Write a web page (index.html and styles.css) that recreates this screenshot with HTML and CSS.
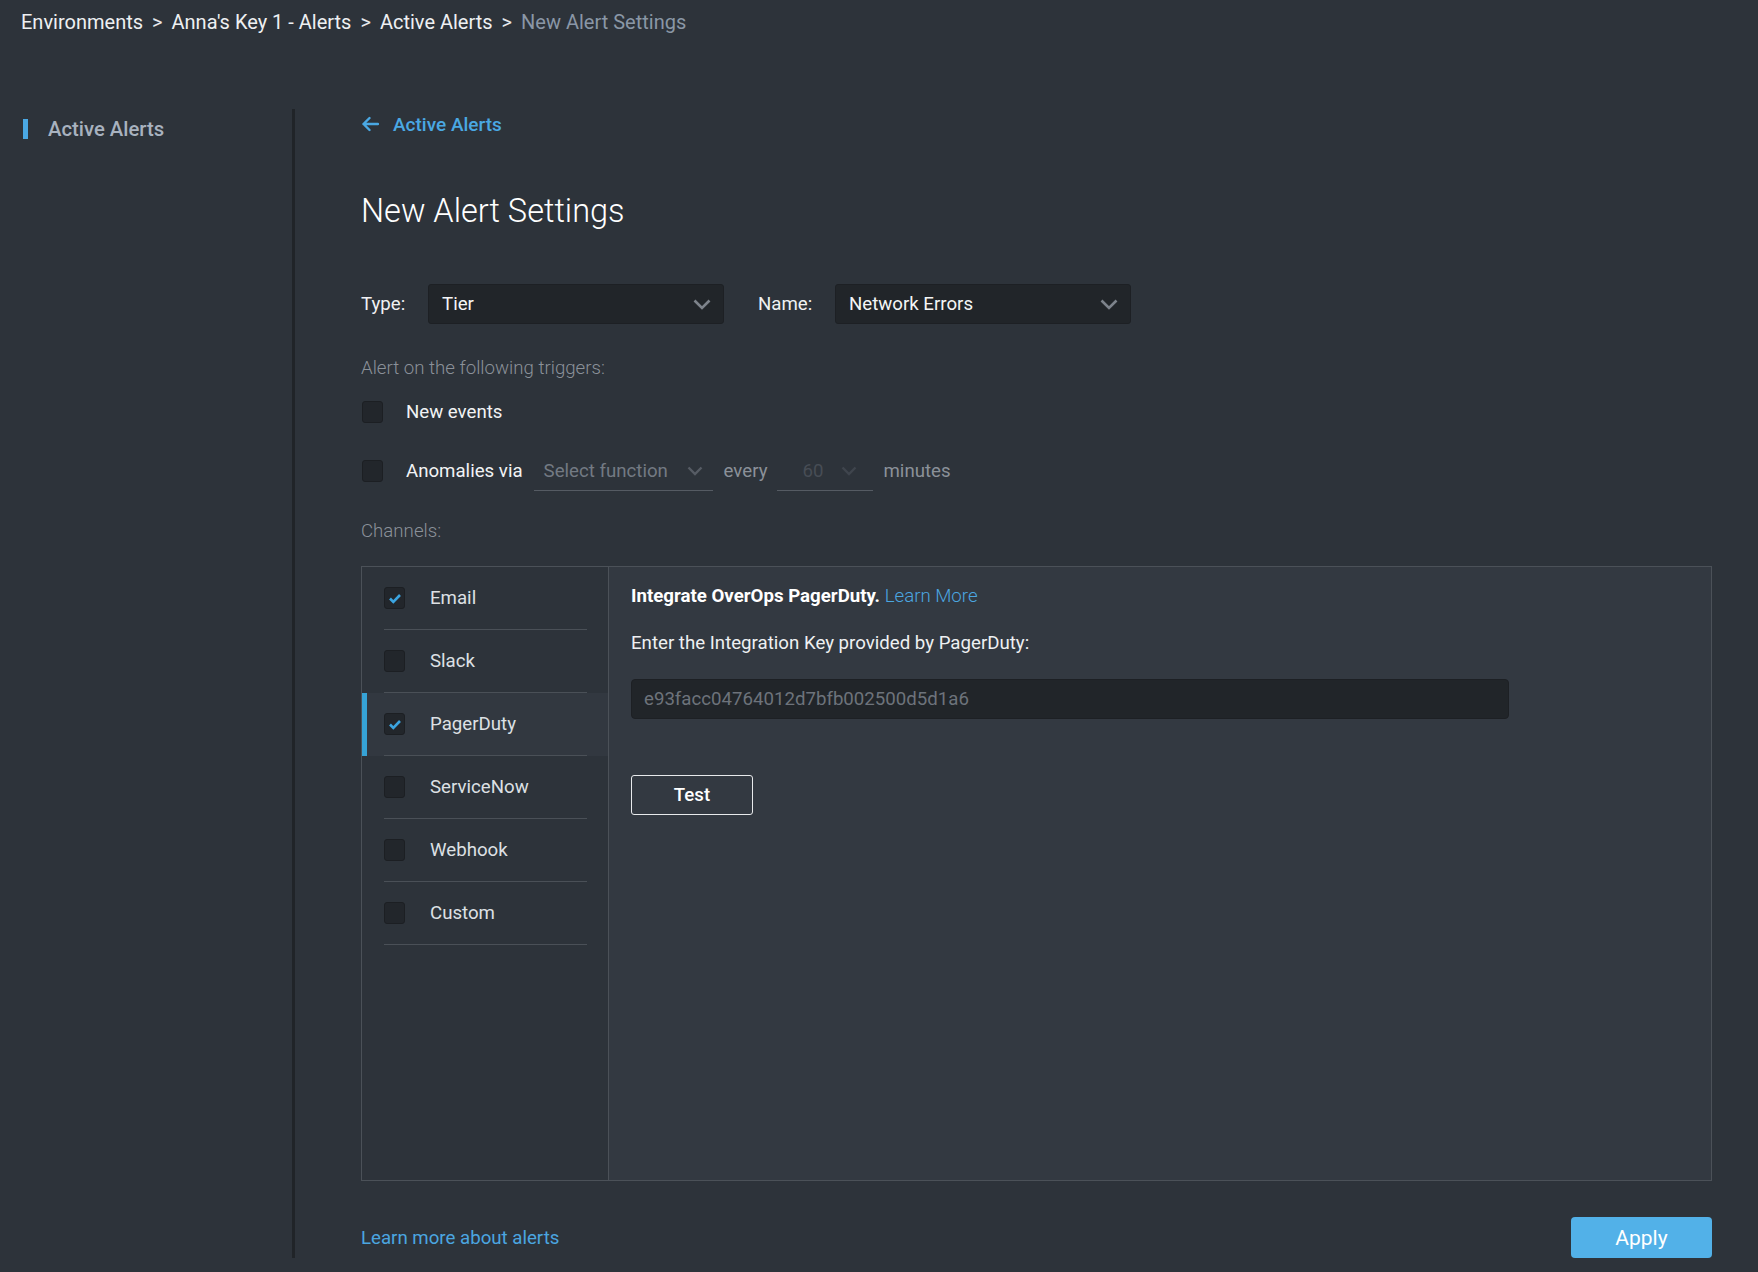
FILE: index.html
```html
<!DOCTYPE html>
<html lang="en">
<head>
<meta charset="utf-8">
<title>New Alert Settings</title>
<link rel="stylesheet" href="styles.css">
</head>
<body>
<header class="breadcrumb">
  <span class="crumb">Environments</span><span class="sep">&gt;</span><span class="crumb">Anna's Key 1 - Alerts</span><span class="sep">&gt;</span><span class="crumb">Active Alerts</span><span class="sep">&gt;</span><span class="crumb current">New Alert Settings</span>
</header>
<div class="layout">
  <aside class="sidebar">
    <div class="side-item"><span class="side-bar"></span><span class="side-text">Active Alerts</span></div>
  </aside>
  <main class="content">
    <a class="back" href="#">
      <svg class="back-arrow" width="18" height="16" viewBox="0 0 18 16"><path d="M17 8H2.5M8.5 2 2.5 8l6 6" fill="none" stroke="#4aa8e3" stroke-width="2.4" stroke-linecap="round" stroke-linejoin="round"/></svg>
      <span>Active Alerts</span>
    </a>
    <h1 class="title">New Alert Settings</h1>

    <div class="type-row">
      <span class="field-label type-label">Type:</span>
      <div class="select"><span>Tier</span><svg width="18" height="11" viewBox="0 0 18 11"><path d="M1.5 1.5 9 9l7.5-7.5" fill="none" stroke="#7d838b" stroke-width="2.6"/></svg></div>
      <span class="field-label name-label">Name:</span>
      <div class="select"><span>Network Errors</span><svg width="18" height="11" viewBox="0 0 18 11"><path d="M1.5 1.5 9 9l7.5-7.5" fill="none" stroke="#7d838b" stroke-width="2.6"/></svg></div>
    </div>

    <div class="section-label triggers-label">Alert on the following triggers:</div>
    <div class="trigger trigger-first">
      <span class="checkbox"></span>
      <span class="trigger-text">New events</span>
    </div>
    <div class="trigger trigger-second">
      <span class="checkbox"></span>
      <span class="trigger-text">Anomalies via</span>
      <div class="line-select func-select"><span>Select function</span><svg width="16" height="10" viewBox="0 0 16 10"><path d="M1.5 1.5 8 8l6.5-6.5" fill="none" stroke="#565c64" stroke-width="2.4"/></svg></div>
      <span class="muted-text every">every</span>
      <div class="line-select minutes-select"><span>60</span><svg width="16" height="10" viewBox="0 0 16 10"><path d="M1.5 1.5 8 8l6.5-6.5" fill="none" stroke="#3f454d" stroke-width="2.4"/></svg></div>
      <span class="muted-text minutes">minutes</span>
    </div>

    <div class="section-label channels-label">Channels:</div>
    <div class="panel">
      <div class="channels">
        <div class="channel"><div class="channel-inner"><span class="checkbox checked"><svg width="14" height="11" viewBox="0 0 14 11"><path d="M2 5.5 5.3 8.8 12 2" fill="none" stroke="#3ba4e0" stroke-width="2.6"/></svg></span><span>Email</span></div></div>
        <div class="channel"><div class="channel-inner"><span class="checkbox"></span><span>Slack</span></div></div>
        <div class="channel selected"><div class="channel-inner"><span class="checkbox checked"><svg width="14" height="11" viewBox="0 0 14 11"><path d="M2 5.5 5.3 8.8 12 2" fill="none" stroke="#3ba4e0" stroke-width="2.6"/></svg></span><span>PagerDuty</span></div></div>
        <div class="channel"><div class="channel-inner"><span class="checkbox"></span><span>ServiceNow</span></div></div>
        <div class="channel"><div class="channel-inner"><span class="checkbox"></span><span>Webhook</span></div></div>
        <div class="channel"><div class="channel-inner"><span class="checkbox"></span><span>Custom</span></div></div>
      </div>
      <div class="detail">
        <p class="integrate"><strong>Integrate OverOps PagerDuty.</strong> <a href="#" class="link">Learn More</a></p>
        <p class="enter">Enter the Integration Key provided by PagerDuty:</p>
        <div class="key-input">e93facc04764012d7bfb002500d5d1a6</div>
        <button class="test-btn" type="button">Test</button>
      </div>
    </div>

    <div class="footer">
      <a href="#" class="link footer-link">Learn more about alerts</a>
      <button class="apply-btn" type="button">Apply</button>
    </div>
  </main>
</div>
</body>
</html>
```
FILE: styles.css
```css
* { box-sizing: border-box; }
html, body {
  margin: 0;
  padding: 0;
  background: #2d333a;
  font-family: Roboto, "Liberation Sans", sans-serif;
  color: #e6e8eb;
}
body { height: 1272px; overflow: hidden; }

.breadcrumb {
  padding: 10px 0 0 21px;
  font-size: 20px;
  line-height: 24px;
  height: 34px;
  color: #eef0f2;
  white-space: nowrap;
}
.breadcrumb .sep { margin: 0 9px; color: #e6e8eb; }
.breadcrumb .current { color: #8a97a6; }

.layout {
  margin-top: 75px;
  display: flex;
  height: 1149px;
}
.sidebar {
  width: 295px;
  flex: none;
  border-right: 3px solid #202428;
  padding-top: 10px;
}
.side-item { display: flex; align-items: center; height: 20px; }
.side-bar { width: 5px; height: 20px; background: #4aa8e3; margin-left: 23px; }
.side-text { margin-left: 20px; font-size: 20.3px; font-weight: 500; color: #a8b2bf; }

.content {
  flex: 1;
  padding: 0 46px 0 66px;
  display: flex;
  flex-direction: column;
}

.back {
  display: flex;
  align-items: center;
  height: 30px;
  gap: 14px;
  color: #4aa8e3;
  font-size: 19px;
  font-weight: 500;
  text-decoration: none;
}
.back-arrow { flex: none; }

.title {
  margin: 52px 0 0;
  font-size: 32.5px;
  line-height: 40px;
  font-weight: 300;
  color: #ffffff;
}

.type-row {
  margin-top: 53px;
  height: 40px;
  display: flex;
  align-items: center;
}
.field-label { font-size: 18.67px; color: #f0f1f3; }
.type-label { width: 67px; }
.name-label { width: 77px; margin-left: 34px; }
.select {
  width: 296px;
  height: 40px;
  background: #212529;
  border: 1px solid #1d2024;
  border-radius: 3px;
  display: flex;
  align-items: center;
  justify-content: space-between;
  padding: 0 12px 0 13px;
  font-size: 18.67px;
  color: #f4f5f6;
}

.section-label {
  font-size: 18.67px;
  line-height: 24px;
  font-weight: 300;
  color: #8b9199;
}
.triggers-label { margin-top: 32px; }
.channels-label { margin-top: 28px; }

.trigger {
  height: 40px;
  display: flex;
  align-items: center;
  font-size: 18.67px;
}
.trigger-first { margin-top: 12px; }
.trigger-second { margin-top: 19px; }
.trigger .checkbox { margin-left: 1px; }
.trigger-text { margin-left: 23px; color: #f2f3f5; }

.checkbox {
  width: 21px;
  height: 22px;
  flex: none;
  background: #22262b;
  border: 1px solid #1c1f23;
  border-radius: 3px;
  display: inline-flex;
  align-items: center;
  justify-content: center;
}

.line-select {
  height: 40px;
  border-bottom: 1px solid #555b63;
  display: flex;
  align-items: center;
  justify-content: space-between;
}
.func-select {
  width: 179px;
  margin-left: 11px;
  padding: 0 10px 0 10px;
  color: #737a83;
}
.minutes-select {
  width: 96px;
  margin-left: 10px;
  padding: 0 16px 0 25px;
  color: #474d55;
}
.muted-text { color: #8b9199; }
.every { margin-left: 11px; }
.minutes { margin-left: 10px; }

.panel {
  margin-top: 23px;
  height: 615px;
  border: 1px solid #4b5158;
  display: grid;
  grid-template-columns: 247px 1fr;
}
.channels {
  border-right: 1px solid #4b5158;
  background: #2d333a;
}
.channel {
  height: 63px;
  position: relative;
}
.channel-inner {
  margin: 0 21px 0 22px;
  height: 63px;
  border-bottom: 1px solid #4a5057;
  display: flex;
  align-items: center;
  font-size: 18.67px;
  color: #dde0e4;
}
.channel-inner .checkbox { margin-right: 25px; }
.channel.selected { background: #323840; }
.channel.selected::before {
  content: "";
  position: absolute;
  left: 0;
  top: 0;
  bottom: 0;
  width: 5px;
  background: #36a3d6;
}

.detail {
  background: #333941;
  padding: 17px 0 0 22px;
  font-size: 18.67px;
}
.detail p { margin: 0; line-height: 24px; }
.integrate strong { color: #ffffff; font-weight: 700; }
.link { color: #4ba6e0; text-decoration: none; }
.integrate .link { font-weight: 300; }
.enter { margin-top: 23px !important; color: #eef0f2; }
.key-input {
  margin-top: 24px;
  width: 878px;
  height: 40px;
  background: #212529;
  border: 1px solid #1d2024;
  border-radius: 4px;
  display: flex;
  align-items: center;
  padding-left: 12px;
  color: #6d737b;
  font-size: 18.67px;
}
.test-btn {
  margin-top: 56px;
  width: 122px;
  height: 40px;
  background: transparent;
  border: 1px solid #e8eaec;
  border-radius: 3px;
  color: #ffffff;
  font-family: Roboto, "Liberation Sans", sans-serif;
  font-size: 18.67px;
  font-weight: 500;
  display: block;
}

.footer {
  margin-top: 36px;
  height: 41px;
  display: flex;
  align-items: center;
  justify-content: space-between;
}
.footer-link { font-size: 18.67px; font-weight: 400; }
.apply-btn {
  width: 141px;
  height: 41px;
  background: #52b1e8;
  border: none;
  border-radius: 4px;
  color: #ffffff;
  font-family: Roboto, "Liberation Sans", sans-serif;
  font-size: 21px;
}
```
